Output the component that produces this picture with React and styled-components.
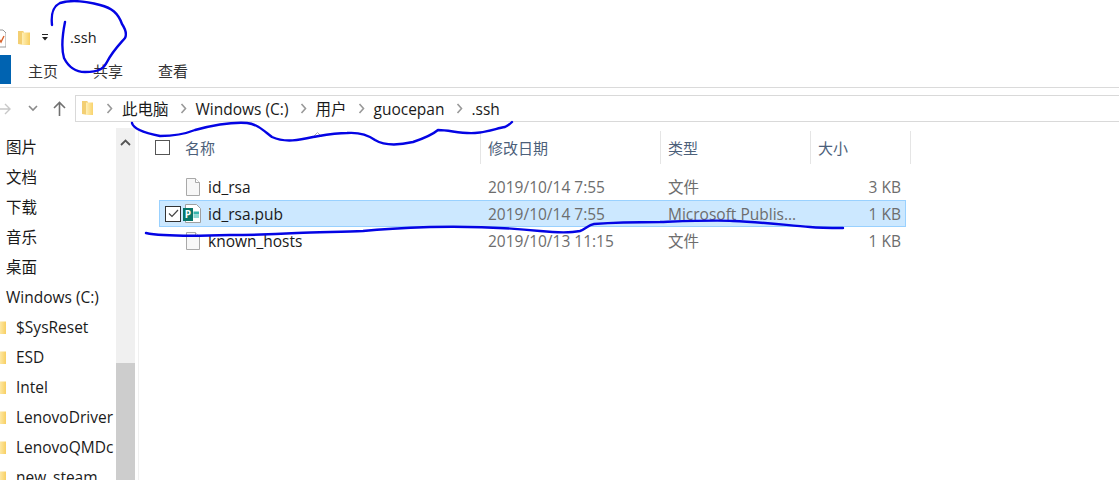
import React from "react";
import styled, { createGlobalStyle } from "styled-components";

const FONT = '"Open Sans", "Noto Sans CJK SC", sans-serif';

const GlobalStyle = createGlobalStyle`
  html, body {
    margin: 0;
    height: 480px;
    overflow: hidden;
    background: #fff;
  }
  body {
    font-family: ${FONT};
    font-size: 15.5px;
    color: #1a1a1a;
  }
`;

const Win = styled.div`
  position: relative;
  width: 1119px;
  height: 480px;
  overflow: hidden;
  display: flex;
  flex-direction: column;
`;

const TitleBar = styled.div`
  height: 55px;
  flex: none;
  display: flex;
  align-items: flex-end;
  padding-bottom: 7px;
  box-sizing: border-box;
  padding-left: 0;
`;

const TitleText = styled.span`
  margin-left: 19px;
  font-size: 14.5px;
  line-height: 20px;
  color: #1a1a1a;
`;

const QatGroup = styled.div`
  display: flex;
  align-items: center;
  height: 20px;
`;

const Tabs = styled.div`
  height: 33px;
  flex: none;
  display: flex;
  align-items: flex-start;
  border-bottom: 1px solid #dadada;
  box-sizing: border-box;
`;

const FileTab = styled.div`
  width: 11px;
  height: 29px;
  background: #0063b1;
  margin-right: 17px;
`;

const Tab = styled.div`
  width: 30px;
  margin-right: 35px;
  font-size: 15px;
  line-height: 32px;
  white-space: nowrap;
  color: #333;
`;

const NavRow = styled.div`
  height: 40px;
  flex: none;
  display: flex;
  align-items: center;
  padding-top: 1px;
  box-sizing: border-box;
`;

const NavButtons = styled.div`
  width: 75px;
  height: 27px;
  flex: none;
  display: flex;
  align-items: center;
  padding-right: 9px;
  box-sizing: border-box;
`;

const AddressBox = styled.div`
  flex: 1;
  height: 27px;
  margin-right: -4px;
  border: 1px solid #d9d9d9;
  box-sizing: border-box;
  display: flex;
  align-items: center;
  padding-left: 5px;
`;

const Crumb = styled.span`
  line-height: 24px;
  color: #1a1a1a;
  white-space: nowrap;
`;

const Sep = styled.span`
  display: flex;
  width: ${(p) => p.$w || 27}px;
  padding-left: 3px;
  box-sizing: border-box;
  justify-content: center;
`;

const Body = styled.div`
  flex: 1;
  min-height: 0;
  display: flex;
`;

const Sidebar = styled.div`
  width: 116px;
  flex: none;
  padding-top: 3px;
  overflow: hidden;
`;

const SideItem = styled.div`
  height: 30px;
  display: flex;
  align-items: center;
  gap: 10px;
  padding-left: ${(p) => (p.$sub ? 0 : 6)}px;
  margin-top: ${(p) => (p.$drive ? 1 : 0)}px;
  white-space: nowrap;
  color: #1a1a1a;
`;

const Scrollbar = styled.div`
  width: 19px;
  flex: none;
  background: #f0f0f0;
  display: flex;
  flex-direction: column;
  align-items: center;
  padding-top: 11px;
  box-sizing: border-box;
`;

const ScrollThumb = styled.div`
  width: 19px;
  flex: 1;
  margin-top: 217px;
  background: #cdcdcd;
`;

const Main = styled.div`
  flex: 1;
  min-width: 0;
  margin-left: 3px;
  border-left: 1px solid #f0f0f0;
  padding-left: 16px;
`;

const HeaderRow = styled.div`
  height: 36px;
  margin-top: 3px;
  display: flex;
  position: relative;
`;

const HeaderCell = styled.div`
  width: ${(p) => p.$w}px;
  flex: none;
  box-sizing: border-box;
  padding-left: ${(p) => p.$pad}px;
  border-right: 1px solid #e5e5e5;
  height: 33px;
  display: flex;
  align-items: center;
  gap: 15px;
  font-size: 15px;
  line-height: 30px;
  color: #4c607a;
`;

const SortCaret = styled.svg`
  position: absolute;
  left: 158px;
  top: 1px;
`;

const CheckBox = styled.span`
  width: ${(p) => (p.$on ? 16 : 15)}px;
  height: ${(p) => (p.$on ? 16 : 15)}px;
  flex: none;
  border: 1px solid ${(p) => (p.$on ? "#333" : "#555")};
  background: ${(p) => (p.$on ? "#fff" : "transparent")};
  box-sizing: border-box;
  display: flex;
  align-items: center;
  justify-content: center;
`;

const Rows = styled.div`
  margin: 6px 0 0 4px;
  width: 747px;
`;

const Row = styled.div`
  height: 27px;
  box-sizing: border-box;
  display: flex;
  align-items: center;
  border: 1px solid ${(p) => (p.$selected ? "#99d1ff" : "transparent")};
  background: ${(p) => (p.$selected ? "#cce8ff" : "transparent")};
`;

const CheckSlot = styled.span`
  width: 23px;
  flex: none;
  display: flex;
  justify-content: flex-end;
  padding-right: 2px;
  box-sizing: border-box;
`;

const IconSlot = styled.span`
  width: 25px;
  flex: none;
  display: flex;
  padding-left: ${(p) => (p.$pub ? 0 : 3)}px;
  box-sizing: border-box;
`;

const NameCell = styled.span`
  width: 280px;
  flex: none;
  color: #1a1a1a;
  white-space: nowrap;
`;

const DateCell = styled.span`
  width: 180px;
  flex: none;
  color: #6d6d6d;
  white-space: nowrap;
`;

const TypeCell = styled.span`
  width: 134px;
  flex: none;
  color: #6d6d6d;
  white-space: nowrap;
`;

const SizeCell = styled.span`
  flex: 1;
  text-align: right;
  padding-right: 4px;
  color: #6d6d6d;
`;

const Ink = styled.svg`
  position: absolute;
  left: 0;
  top: 0;
  pointer-events: none;
`;

const Folder = ({ w = 14, h = 17, cut = 0 }) => (
  <svg width={w} height={h} viewBox={`${cut} 0 ${w} ${h}`} style={{ flex: "none" }}>
    <defs>
      <linearGradient id={`fold${w}${cut}`} x1="0" x2="1" y1="0" y2="0">
        <stop offset="0" stopColor="#fff0b8" />
        <stop offset="1" stopColor="#f8cf62" />
      </linearGradient>
    </defs>
    <path d="M1 1h5l1 1v13l-6-1z" fill="#f3cf73" />
    <path d="M5 2.500h8v12.500H5z" fill={`url(#fold${w}${cut})`} />
  </svg>
);

const Page = () => (
  <svg width="14" height="18" viewBox="0 0 14 18">
    <path d="M.5.5h9l4 4v13H.5z" fill="#f7f7f7" stroke="#a9a9a9" />
    <path d="M9.500.5v4h4" fill="#fff" stroke="#a9a9a9" />
  </svg>
);

const PubIcon = () => (
  <svg width="18" height="19" viewBox="0 0 18 19">
    <path d="M2.500.5h11l4 4v14h-15z" fill="#fff" stroke="#a0a0a0" />
    <rect x="10.500" y="7.500" width="5.500" height="3" fill="#36b4ac" />
    <rect x="10.500" y="11" width="5.500" height="3" fill="#8fd8d2" />
    <rect x="0" y="4" width="10" height="13" fill="#077568" />
    <text x="5" y="14" fontSize="10" fontWeight="700" textAnchor="middle" fill="#fff" fontFamily="Open Sans">P</text>
  </svg>
);

const Chevron = ({ color = "#999" }) => (
  <svg width="7" height="11" viewBox="0 0 7 11">
    <path d="M1.500 1l4 4.500-4 4.500" fill="none" stroke={color} strokeWidth="1.600" />
  </svg>
);

const sideItems = ["图片", "文档", "下载", "音乐", "桌面"];
const sideSubs = ["$SysReset", "ESD", "Intel", "LenovoDriver", "LenovoQMDc", "new_steam"];
const crumbs = ["此电脑", "Windows (C:)", "用户", "guocepan", ".ssh"];

const files = [
  { name: "id_rsa", date: "2019/10/14 7:55", type: "文件", size: "3 KB" },
  { name: "id_rsa.pub", date: "2019/10/14 7:55", type: "Microsoft Publis...", size: "1 KB", selected: true },
  { name: "known_hosts", date: "2019/10/13 11:15", type: "文件", size: "1 KB" },
];

export default function App() {
  return (
    <>
      <GlobalStyle />
      <Win>
        <TitleBar>
          <QatGroup>
            <svg width="6" height="20" viewBox="18 0 6 20" style={{ flex: "none", marginRight: 11 }}>
              <path d="M11 2h10l3 3v14H11z" fill="#fff" stroke="#999" />
              <path d="M17 11l2 3 3-6" stroke="#d9622b" strokeWidth="1.400" fill="none" />
            </svg>
            <Folder w={13} h={17} />
            <svg width="12" height="10" viewBox="0 0 12 10" style={{ marginLeft: 9, flex: "none" }}>
              <path d="M3 1.500h6" stroke="#222" strokeWidth="1" />
              <path d="M3 4h6L6 7.500z" fill="#222" />
            </svg>
          </QatGroup>
          <TitleText>.ssh</TitleText>
        </TitleBar>
        <Tabs>
          <FileTab />
          <Tab>主页</Tab>
          <Tab>共享</Tab>
          <Tab>查看</Tab>
        </Tabs>
        <NavRow>
          <NavButtons>
            <svg width="11" height="12" viewBox="0 0 11 12" style={{ flex: "none" }}>
              <path d="M0 6h10M5 1l5 5-5 5" fill="none" stroke="#c8c8c8" strokeWidth="1.400" />
            </svg>
            <svg width="10" height="7" viewBox="0 0 10 7" style={{ flex: "none", marginLeft: 17 }}>
              <path d="M1 1l4 4 4-4" fill="none" stroke="#8a8a8a" strokeWidth="1.600" />
            </svg>
            <svg width="13" height="15" viewBox="0 0 13 15" style={{ flex: "none", marginLeft: 15 }}>
              <path d="M6.500 15V1.500M1 7l5.500-5.500L12 7" fill="none" stroke="#707070" strokeWidth="1.600" />
            </svg>
          </NavButtons>
          <AddressBox>
            <Folder w={12} h={17} />
            <Sep $w={29}>
              <Chevron />
            </Sep>
            {crumbs.map((c, i) => (
              <React.Fragment key={c}>
                <Crumb>{c}</Crumb>
                {i < crumbs.length - 1 && (
                  <Sep>
                    <Chevron />
                  </Sep>
                )}
              </React.Fragment>
            ))}
          </AddressBox>
        </NavRow>
        <Body>
          <Sidebar>
            {sideItems.map((s) => (
              <SideItem key={s}>{s}</SideItem>
            ))}
            <SideItem $drive>Windows (C:)</SideItem>
            {sideSubs.map((s) => (
              <SideItem key={s} $sub>
                <Folder w={6} h={17} cut={7} />
                {s}
              </SideItem>
            ))}
          </Sidebar>
          <Scrollbar>
            <svg width="11" height="7" viewBox="0 0 11 7" style={{ flex: "none" }}>
              <path d="M1 6l4.500-4.500L10 6" fill="none" stroke="#555" strokeWidth="1.800" />
            </svg>
            <ScrollThumb />
          </Scrollbar>
          <Main>
            <HeaderRow>
              <HeaderCell $w={326} $pad={0}>
                <CheckBox />
                名称
              </HeaderCell>
              <SortCaret width="9" height="5" viewBox="0 0 9 5">
                <path d="M.5 4.500l4-4 4 4" fill="none" stroke="#aaa" />
              </SortCaret>
              <HeaderCell $w={180} $pad={7}>修改日期</HeaderCell>
              <HeaderCell $w={150} $pad={7}>类型</HeaderCell>
              <HeaderCell $w={100} $pad={7}>大小</HeaderCell>
            </HeaderRow>
            <Rows>
              {files.map((f) => (
                <Row key={f.name} $selected={f.selected}>
                  <CheckSlot>
                    {f.selected && (
                      <CheckBox $on>
                        <svg width="11" height="9" viewBox="0 0 11 9">
                          <path d="M1 4.500l3 3 6-6.500" fill="none" stroke="#444" strokeWidth="1.200" />
                        </svg>
                      </CheckBox>
                    )}
                  </CheckSlot>
                  <IconSlot $pub={f.selected}>{f.selected ? <PubIcon /> : <Page />}</IconSlot>
                  <NameCell>{f.name}</NameCell>
                  <DateCell>{f.date}</DateCell>
                  <TypeCell>{f.type}</TypeCell>
                  <SizeCell>{f.size}</SizeCell>
                </Row>
              ))}
            </Rows>
          </Main>
        </Body>
        <Ink width="1119" height="480" viewBox="0 0 1119 480" fill="none" stroke="#0404e4" strokeWidth="2.400" strokeLinecap="round" strokeLinejoin="round">
          <path d="M52 25C51 15 52 7 60 3C70 0 85 1 100 5C112 8 118 13 122 24C126 30 127 34 125 38C118 46 112 52 107 62C104 68 100 72 85 72C75 72 68 66 64 58C61 48 63 32 65 22" />
          <path d="M132 123C133 128 140 132 160 136C172 136 185 134 195 130C210 126 232 122 247 123C258 124 265 132 272 137C285 143 300 140 313 137C325 135 335 133 347 133C360 132 368 135 375 140C385 146 400 145 413 142C425 138 432 135 438 130C450 130 460 134 475 133C490 132 497 128 505 127C509 125 511 123 512 122" />
          <path d="M146 233C160 236 200 236 230 235C260 235 280 234 297 233C320 232 345 232 363 231C385 229 405 228 430 227C470 226 510 228 540 231C550 232 570 233 580 231C586 229 588 225 594 224C620 222 640 222 660 222C690 221 715 220 733 221C760 222 785 225 810 227C820 228 832 228 843 228" />
        </Ink>
      </Win>
    </>
  );
}
